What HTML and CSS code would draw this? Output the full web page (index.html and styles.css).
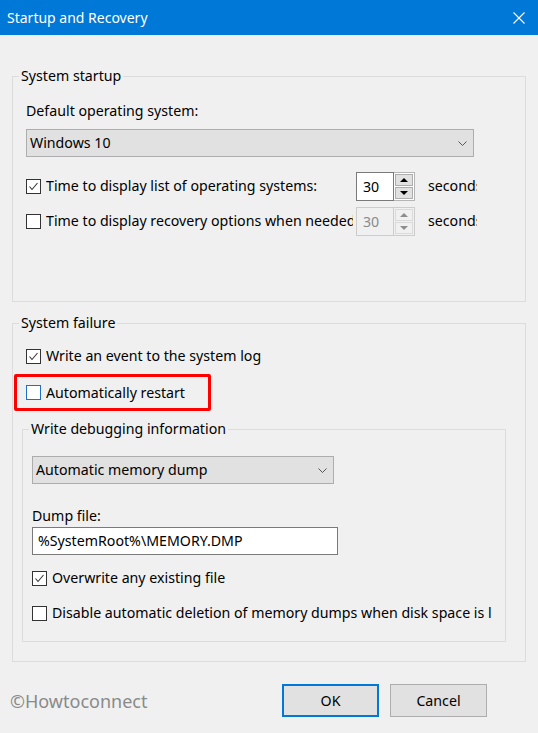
FILE: index.html
```html
<!DOCTYPE html>
<html>
<head>
<meta charset="utf-8">
<link rel="stylesheet" href="styles.css">
</head>
<body>
<div class="titlebar">
  <span class="title">Startup and Recovery</span>
  <svg class="close" viewBox="0 0 12 12"><path d="M0.5 0.5L11.5 11.5M11.5 0.5L0.5 11.5" stroke="#fff" stroke-width="1.1" fill="none"/></svg>
</div>
<div class="content">
  <fieldset class="group g1">
    <legend>System startup</legend>
    <div class="label">Default operating system:</div>
    <div class="select s-os"><span>Windows 10</span><svg class="chev" viewBox="0 0 9 5"><path d="M0.5 0.5L4.5 4.5L8.5 0.5" stroke="#555" fill="none"/></svg></div>
    <div class="row r1">
      <span class="cb"><svg viewBox="0 0 13 13"><path d="M2.5 6.5L5 9.5L10.5 3" stroke="#333" stroke-width="1.1" fill="none"/></svg></span>
      <span class="cb-label w-time">Time to display list of operating systems:</span>
      <span class="spin">
        <span class="spin-val">30</span>
        <span class="spin-btns"><span class="sb"><i class="tri up"></i></span><span class="sb"><i class="tri down"></i></span></span>
      </span>
      <span class="secs">seconds</span>
    </div>
    <div class="row r2">
      <span class="cb"></span>
      <span class="cb-label w-time">Time to display recovery options when needed</span>
      <span class="spin disabled">
        <span class="spin-val">30</span>
        <span class="spin-btns"><span class="sb"><i class="tri up"></i></span><span class="sb"><i class="tri down"></i></span></span>
      </span>
      <span class="secs">seconds</span>
    </div>
  </fieldset>

  <fieldset class="group g2">
    <legend>System failure</legend>
    <div class="row small first">
      <span class="cb"><svg viewBox="0 0 13 13"><path d="M2.5 6.5L5 9.5L10.5 3" stroke="#333" stroke-width="1.1" fill="none"/></svg></span>
      <span class="cb-label">Write an event to the system log</span>
    </div>
    <div class="redbox">
      <div class="row small">
        <span class="cb cb-hover"></span>
        <span class="cb-label">Automatically restart</span>
      </div>
    </div>
    <fieldset class="group g3">
      <legend>Write debugging information</legend>
      <div class="select s-dump"><span>Automatic memory dump</span><svg class="chev" viewBox="0 0 9 5"><path d="M0.5 0.5L4.5 4.5L8.5 0.5" stroke="#555" fill="none"/></svg></div>
      <div class="label dump-label">Dump file:</div>
      <div class="textbox">%SystemRoot%\MEMORY.DMP</div>
      <div class="row small r-over">
        <span class="cb"><svg viewBox="0 0 13 13"><path d="M2.5 6.5L5 9.5L10.5 3" stroke="#333" stroke-width="1.1" fill="none"/></svg></span>
        <span class="cb-label">Overwrite any existing file</span>
      </div>
      <div class="row small r-dis">
        <span class="cb"></span>
        <span class="cb-label w-dis">Disable automatic deletion of memory dumps when disk space is low</span>
      </div>
    </fieldset>
  </fieldset>
</div>
<div class="footer">
  <span class="watermark">©Howtoconnect</span>
  <div class="buttons">
    <span class="btn btn-default">OK</span>
    <span class="btn">Cancel</span>
  </div>
</div>
</body>
</html>
```

FILE: styles.css
```css
* { box-sizing: border-box; }
html, body { margin: 0; padding: 0; }
body {
  width: 538px;
  height: 733px;
  overflow: hidden;
  background: #f0f0f0;
  font-family: "Noto Sans", "Open Sans", sans-serif;
  font-size: 14.2px;
  line-height: 20px;
  color: #000;
}
.titlebar {
  height: 35px;
  background: #0078d7;
  color: #fff;
  display: flex;
  align-items: center;
  justify-content: space-between;
  padding: 0 13px 0 7px;
  font-size: 14px;
}
.close { width: 12px; height: 12px; display: block; }

.content { padding: 31px 12px 0; }

.group {
  margin: 0;
  min-width: 0;
  border: 1px solid #dcdcdc;
  padding: 0 12px 0 13px;
}
.group > legend {
  padding: 0 2px;
  margin-left: -7px;
  line-height: 20px;
}
.g1 { padding-top: 15px; padding-bottom: 66px; }
.g2 { margin-top: 11px; padding-top: 13px; padding-bottom: 19px; padding-right: 0; }

.label { height: 20px; white-space: nowrap; }

.select {
  height: 28px;
  border: 1px solid #adadad;
  background: #e1e1e1;
  display: flex;
  align-items: center;
  justify-content: space-between;
  padding: 0 6px 0 3px;
}
.s-os { margin-top: 8px; width: 448px; }
.chev { width: 9px; height: 5px; display: block; }

.row { display: flex; align-items: center; height: 28px; }
.row.small { height: 20px; }
.r1 { margin-top: 15px; }
.r2 { margin-top: 7px; }

.cb {
  flex: none;
  width: 15px;
  height: 15px;
  border: 1px solid #333;
  background: #fff;
  display: flex;
}
.cb svg { width: 13px; height: 13px; display: block; }
.cb-hover { border-color: #1c6fcb; }
.cb-label { margin-left: 5px; white-space: nowrap; overflow: hidden; }
.w-time { width: 307px; flex: none; }
.w-dis { width: 440px; flex: none; }

.spin { flex: none; margin-left: 3px; width: 59px; height: 29px; display: flex; }
.spin-val {
  width: 38px;
  border: 1px solid #7a7a7a;
  background: #fff;
  padding-left: 6px;
  line-height: 27px;
}
.spin-btns {
  width: 21px;
  border: 1px solid #b5b5b5;
  border-left: none;
  background: #fff;
  display: flex;
  flex-direction: column;
  padding: 1px;
  gap: 1px;
}
.sb {
  flex: 1;
  background: #e1e1e1;
  border: 1px solid #adadad;
  display: flex;
  align-items: center;
  justify-content: center;
}
.tri { width: 0; height: 0; border-left: 4px solid transparent; border-right: 4px solid transparent; }
.tri.up { border-bottom: 4px solid #000; }
.tri.down { border-top: 4px solid #000; }
.spin.disabled .spin-val { border-color: #cccccc; background: #f0f0f0; color: #8a8a8a; }
.spin.disabled .spin-btns { border-color: #cccccc; background: #f0f0f0; }
.spin.disabled .sb { background: #f0f0f0; border-color: #dadada; }
.spin.disabled .tri.up { border-bottom-color: #8d8d8d; }
.spin.disabled .tri.down { border-top-color: #8d8d8d; }

.secs { margin-left: 13px; width: 49px; flex: none; overflow: hidden; white-space: nowrap; }

.row.first { margin-top: 0; }
.redbox {
  margin: 8px 0 0 -12px;
  width: 197px;
  height: 37px;
  border: 3px solid #ff0000;
  border-radius: 2px;
  padding-left: 9px;
  display: flex;
  align-items: center;
}

.g3 {
  margin: 8px 0 0 -4px;
  width: 484px;
  padding: 17px 13px 18px 9px;
}
.g3 > legend { margin-left: -3px; }
.s-dump { width: 302px; }
.dump-label { margin-top: 22px; }
.textbox {
  margin-top: 1px;
  width: 306px;
  height: 28px;
  border: 1px solid #7a7a7a;
  background: #fff;
  padding-left: 5px;
  line-height: 26px;
  white-space: nowrap;
}
.r-over { margin-top: 13px; }
.r-dis { margin-top: 15px; }

.footer {
  margin-top: 22px;
  height: 33px;
  display: flex;
  align-items: center;
  justify-content: space-between;
  padding: 0 51px 0 10px;
}
.watermark { color: #8a8a8a; font-size: 18px; }
.buttons { display: flex; gap: 11px; }
.btn {
  width: 97px;
  height: 33px;
  background: #e1e1e1;
  border: 1px solid #adadad;
  display: flex;
  align-items: center;
  justify-content: center;
}
.btn-default { border: 2px solid #0078d7; }
```
